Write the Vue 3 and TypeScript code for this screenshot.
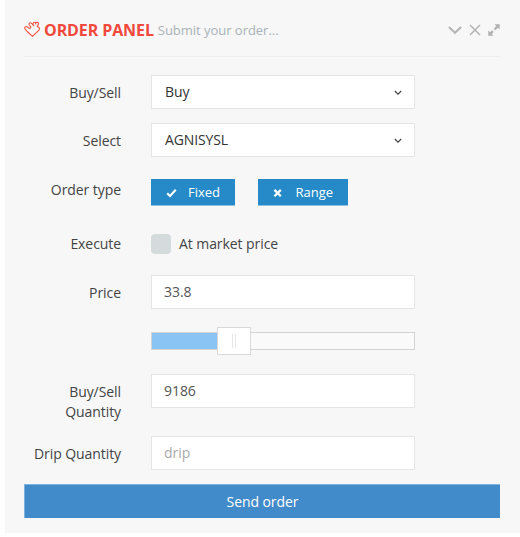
<script setup lang="ts">
import { ref } from 'vue'

const side = ref('Buy')
const symbol = ref('AGNISYSL')
const price = ref('33.8')
const quantity = ref('9186')
const drip = ref('')
const atMarket = ref(false)
const sliderPercent = ref(31.3)
</script>

<template>
  <section class="panel">
    <header class="head">
      <svg class="hand" viewBox="0 0 16 16">
        <path d="M8.500 15.300 3.200 10.500 1 7.800C.2 6.500 1.500 4.900 3 5.700L5.200 7.200C6.300 7.600 7.200 6.400 6.500 5.500L5.300 4C4.400 2.600 6 1.200 7.300 2.100L8.900 3.700 9.300 2.100C9.700.9 11.300.9 11.800 2.100 12.600.7 14.800 1.300 14.500 3L13.300 5.700C15.100 5.700 16.100 7.600 14.900 9.100z" />
        <path d="M8.900 3.700 10 5.200M11.800 2.100 11.600 3.500" />
      </svg>
      <h1 class="title">ORDER PANEL</h1>
      <span class="sub">Submit your order...</span>
      <div class="tools">
        <svg width="14" height="12" viewBox="0 0 14 12"><path class="line" d="M.9 3 7 8.800 13.100 3" /></svg>
        <svg width="12" height="12" viewBox="0 0 12 12"><path class="line thin" d="m1 1 10 10M11 1 1 11" /></svg>
        <svg width="12" height="12" viewBox="0 0 12 12">
          <path class="solid" d="M6.500.3h5.200v5.200L9.900 3.700 7.300 6.300 5.700 4.700l2.600-2.600zM5.500 11.700H.3V6.500l1.800 1.800 2-2 1.600 1.600-2 2z" />
        </svg>
      </div>
    </header>

    <form class="form" @submit.prevent>
      <label class="label" for="side">Buy/Sell</label>
      <div class="pick">
        <select id="side" v-model="side" class="control">
          <option>Buy</option>
          <option>Sell</option>
        </select>
        <svg class="caret" viewBox="0 0 8 6"><path d="m.8 1 3.200 3.200L7.200 1" /></svg>
      </div>

      <label class="label" for="symbol">Select</label>
      <div class="pick">
        <select id="symbol" v-model="symbol" class="control">
          <option>AGNISYSL</option>
        </select>
        <svg class="caret" viewBox="0 0 8 6"><path d="m.8 1 3.200 3.200L7.200 1" /></svg>
      </div>

      <span class="label kind">Order type</span>
      <div class="types">
        <button class="type fixed" type="button">
          <svg width="12" height="10" viewBox="0 0 12 10"><path d="m1.300 5.200 3.100 3L10.700 1.500" /></svg>
          <span>Fixed</span>
        </button>
        <button class="type range" type="button">
          <svg width="10" height="10" viewBox="0 0 10 10"><path d="m1.500 1.700 6.800 6.800M8.300 1.700 1.500 8.500" /></svg>
          <span>Range</span>
        </button>
      </div>

      <span class="label exec">Execute</span>
      <label class="market">
        <input v-model="atMarket" class="check" type="checkbox" />
        <span>At market price</span>
      </label>

      <label class="label" for="price">Price</label>
      <input id="price" v-model="price" class="control" type="text" />

      <div class="slider">
        <div class="fill" :style="{ width: sliderPercent + '%' }"></div>
        <div class="handle" :style="{ left: sliderPercent + '%' }"></div>
      </div>

      <label class="label" for="quantity">Buy/Sell<br />Quantity</label>
      <input id="quantity" v-model="quantity" class="control" type="text" />

      <label class="label" for="drip">Drip Quantity</label>
      <input id="drip" v-model="drip" class="control" type="text" placeholder="drip" />
    </form>

    <button class="send" type="button">Send order</button>
  </section>
</template>

<style>
body {
  background: #fff;
}
</style>

<style scoped>
.panel {
  box-sizing: border-box;
  height: 533px;
  margin-left: 5px;
  padding: 0 20px 0 19px;
  background: #f7f7f7;
  color: #444;
  font: 14px/20px "Open Sans", "Noto Sans", sans-serif;
}
.head {
  box-sizing: border-box;
  display: flex;
  align-items: center;
  height: 57px;
  padding-top: 3px;
  border-bottom: 1px solid #eee;
}
.hand {
  width: 16px;
  height: 16px;
  margin: 0 4px 2px 0;
  fill: none;
  stroke: #f0523f;
  stroke-width: 1.1;
  stroke-linejoin: round;
}
.title {
  margin: 0 4px 0 0;
  color: #f0483a;
  font-size: 16px;
  font-weight: 700;
  letter-spacing: -0.1px;
  line-height: 20px;
}
.sub {
  padding-top: 1px;
  color: #aab2b8;
  font-size: 13px;
  letter-spacing: -0.03px;
}
.tools {
  display: flex;
  align-items: center;
  gap: 7px;
  margin-left: auto;
}
.tools svg {
  display: block;
}
.line {
  fill: none;
  stroke: #b5b5b5;
  stroke-width: 2;
}
.thin {
  stroke-width: 1.5;
}
.solid {
  fill: #b0b0b0;
}
.form {
  display: grid;
  grid-template-columns: 97px 264px;
  grid-template-rows: 48px 56px 55px 41px 52px 47px 62px 48px;
  align-items: start;
  column-gap: 30px;
  padding-top: 18px;
}
.label {
  padding-top: 8px;
  letter-spacing: -0.07px;
  text-align: right;
}
.label.kind {
  padding-top: 1px;
}
.label.exec {
  padding-top: 0;
}
.control {
  box-sizing: border-box;
  display: block;
  width: 100%;
  height: 34px;
  margin: 0;
  padding: 0 12px 1px;
  appearance: none;
  border: 1px solid #e5e5e5;
  border-radius: 0;
  background: #fff;
  color: #555;
  font: inherit;
  letter-spacing: -0.05px;
  outline: 0;
}
select.control {
  padding: 0 13px;
  color: #333;
  letter-spacing: -0.12px;
}
.control::placeholder {
  color: #aaa;
}
.pick {
  display: grid;
  align-items: center;
}
.pick > * {
  grid-area: 1 / 1;
}
.caret {
  justify-self: end;
  width: 8px;
  height: 6px;
  margin: 2px 13px 0 0;
  fill: none;
  stroke: #444;
  stroke-width: 1.2;
  pointer-events: none;
}
.types {
  display: flex;
  gap: 23px;
}
.type {
  box-sizing: border-box;
  display: flex;
  align-items: center;
  height: 27px;
  padding: 0 15px 1px;
  border: 0;
  border-bottom: 1px solid #8fc0e2;
  background: #258ac7;
  color: #fff;
  font: 13px/18px "Open Sans", sans-serif;
}
.type svg {
  margin-top: 2px;
  fill: none;
  stroke: #fff;
  stroke-width: 2.4;
}
.fixed {
  width: 84px;
  gap: 11px;
}
.range {
  width: 90px;
  gap: 13px;
}
.market {
  display: flex;
  gap: 8px;
  letter-spacing: -0.07px;
}
.check {
  width: 20px;
  height: 20px;
  margin: 0;
  appearance: none;
  border-radius: 4px;
  background: #d5dbdd;
}
.slider {
  position: relative;
  grid-column: 2;
  box-sizing: border-box;
  height: 18px;
  margin-top: 5px;
  border: 1px solid #d3d3d3;
  background: #fafafa;
}
.fill {
  height: 100%;
  background: #89c4f4;
}
.handle {
  position: absolute;
  top: -6px;
  display: flex;
  align-items: center;
  justify-content: center;
  box-sizing: border-box;
  width: 34px;
  height: 28px;
  margin-left: -17px;
  border: 1px solid #d9d9d9;
  background: #fff;
}
.handle::before {
  width: 2px;
  height: 14px;
  border: solid #e8e7e6;
  border-width: 0 1px;
  content: "";
}
.send {
  display: block;
  width: 100%;
  height: 34px;
  margin: 0;
  padding: 0;
  border: solid #80b2db;
  border-width: 1px 0 0 1px;
  background: #428bca;
  color: #fff;
  font: inherit;
  letter-spacing: -0.07px;
}
</style>
